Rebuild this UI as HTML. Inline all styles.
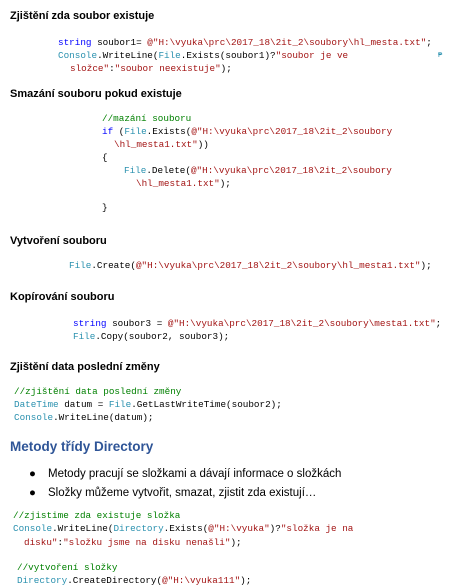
<!DOCTYPE html>
<html><head><meta charset="utf-8"><style>
body{margin:0;width:456px;height:586px;background:#fff;position:relative;overflow:hidden}
.h{position:absolute;font:bold 11px "Liberation Sans",sans-serif;color:#000;white-space:nowrap;line-height:14px}
.c{position:absolute;font:9.3px "Liberation Mono",monospace;color:#000;white-space:pre;line-height:12px}
.k{color:#0000ff}.t{color:#2b91af}.s{color:#a31515}.g{color:#008000}
.b{position:absolute;font:11.5px "Liberation Sans",sans-serif;color:#000;white-space:nowrap;line-height:14px}
</style></head><body>
<div class="h" style="left:10px;top:9px">Zjištění zda soubor existuje</div>
<div class="c" style="left:58px;top:37px"><span class="k">string</span> soubor1= <span class="s">@"H:\vyuka\prc\2017_18\2it_2\soubory\hl_mesta.txt"</span>;</div>
<div class="c" style="left:58px;top:50px"><span class="t">Console</span>.WriteLine(<span class="t">File</span>.Exists(soubor1)?<span class="s">"soubor je ve</span></div>
<div class="c" style="left:438px;top:50px;color:#2b91af;font-size:7px">₱</div>
<div class="c" style="left:70px;top:63px"><span class="s">složce"</span>:<span class="s">"soubor neexistuje"</span>);</div>
<div class="h" style="left:10px;top:87px">Smazání souboru pokud existuje</div>
<div class="c" style="left:102px;top:113px"><span class="g">//mazání souboru</span></div>
<div class="c" style="left:102px;top:126px"><span class="k">if</span> (<span class="t">File</span>.Exists(<span class="s">@"H:\vyuka\prc\2017_18\2it_2\soubory</span></div>
<div class="c" style="left:114px;top:139px"><span class="s">\hl_mesta1.txt"</span>))</div>
<div class="c" style="left:102px;top:152px">{</div>
<div class="c" style="left:124px;top:165px"><span class="t">File</span>.Delete(<span class="s">@"H:\vyuka\prc\2017_18\2it_2\soubory</span></div>
<div class="c" style="left:136px;top:178px"><span class="s">\hl_mesta1.txt"</span>);</div>
<div class="c" style="left:102px;top:202px">}</div>
<div class="h" style="left:10px;top:234px">Vytvoření souboru</div>
<div class="c" style="left:69px;top:260px"><span class="t">File</span>.Create(<span class="s">@"H:\vyuka\prc\2017_18\2it_2\soubory\hl_mesta1.txt"</span>);</div>
<div class="h" style="left:10px;top:290px">Kopírování souboru</div>
<div class="c" style="left:73px;top:318px"><span class="k">string</span> soubor3 = <span class="s">@"H:\vyuka\prc\2017_18\2it_2\soubory\mesta1.txt"</span>;</div>
<div class="c" style="left:73px;top:331px"><span class="t">File</span>.Copy(soubor2, soubor3);</div>
<div class="h" style="left:10px;top:360px">Zjištění data poslední změny</div>
<div class="c" style="left:14px;top:386px"><span class="g">//zjištění data poslední změny</span></div>
<div class="c" style="left:14px;top:399px"><span class="t">DateTime</span> datum = <span class="t">File</span>.GetLastWriteTime(soubor2);</div>
<div class="c" style="left:14px;top:412px"><span class="t">Console</span>.WriteLine(datum);</div>
<div class="h" style="left:10px;top:439px;font-size:13.5px;color:#2f5597;line-height:16px">Metody třídy Directory</div>
<div class="b" style="left:29px;top:467px">●</div>
<div class="b" style="left:48px;top:467px">Metody pracují se složkami a dávají informace o složkách</div>
<div class="b" style="left:29px;top:486px">●</div>
<div class="b" style="left:48px;top:486px">Složky můžeme vytvořit, smazat, zjistit zda existují…</div>
<div class="c" style="left:13px;top:510px"><span class="g">//zjistime zda existuje složka</span></div>
<div class="c" style="left:13px;top:523px"><span class="t">Console</span>.WriteLine(<span class="t">Directory</span>.Exists(<span class="s">@"H:\vyuka"</span>)?<span class="s">"složka je na</span></div>
<div class="c" style="left:24px;top:537px"><span class="s">disku"</span>:<span class="s">"složku jsme na disku nenašli"</span>);</div>
<div class="c" style="left:17px;top:562px"><span class="g">//vytvoření složky</span></div>
<div class="c" style="left:17px;top:575px"><span class="t">Directory</span>.CreateDirectory(<span class="s">@"H:\vyuka111"</span>);</div>
</body></html>
